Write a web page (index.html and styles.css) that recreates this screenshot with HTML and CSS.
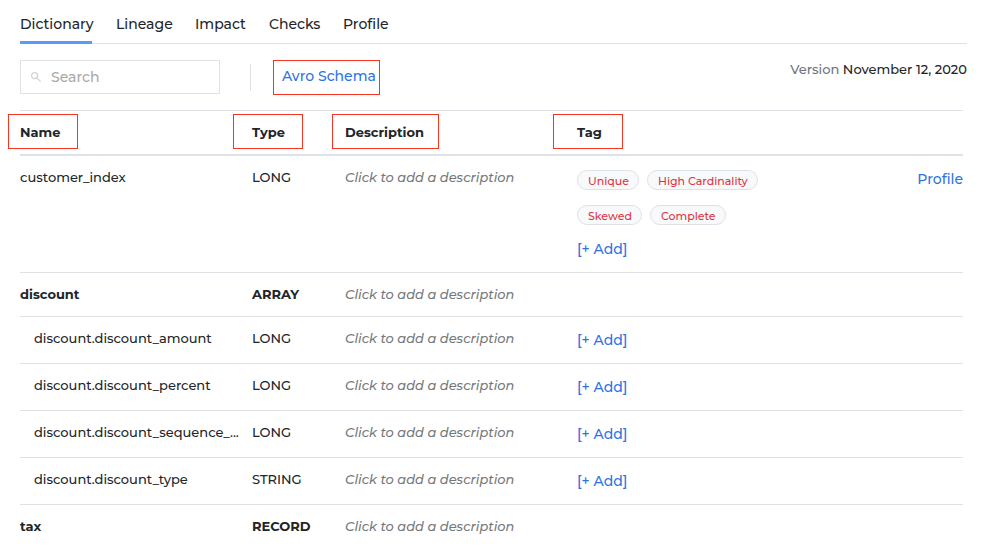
FILE: index.html
```html
<!DOCTYPE html>
<html lang="en">
<head>
<meta charset="utf-8">
<title>Dictionary</title>
<link rel="stylesheet" href="styles.css">
</head>
<body>
<main class="page">
  <nav class="tabs">
    <a class="tab tab-active" href="#dictionary">Dictionary</a>
    <a class="tab" href="#lineage">Lineage</a>
    <a class="tab" href="#impact">Impact</a>
    <a class="tab" href="#checks">Checks</a>
    <a class="tab" href="#profile">Profile</a>
  </nav>
  <div class="toolbar">
    <label class="search">
      <svg class="search-icon" viewBox="0 0 12 12" aria-hidden="true"><circle cx="4.6" cy="4.6" r="3"/><path d="M6.8 6.8l3.8 3.8"/></svg>
      <input class="search-input" type="text" placeholder="Search" aria-label="Search">
    </label>
    <span class="divider"></span>
    <a class="link schema" href="#schema">Avro Schema</a>
    <p class="version"><span class="muted">Version</span> November 12, 2020</p>
  </div>
  <table class="fields">
    <colgroup><col class="col-name"><col class="col-type"><col class="col-desc"><col><col class="col-profile"></colgroup>
    <thead>
      <tr>
        <th><span class="mark mark-name">Name</span></th>
        <th><span class="mark mark-type">Type</span></th>
        <th><span class="mark mark-desc">Description</span></th>
        <th><span class="mark mark-tag">Tag</span></th>
        <th></th>
      </tr>
    </thead>
    <tbody>
      <tr>
        <td>customer_index</td><td>LONG</td>
        <td class="desc">Click to add a description</td>
        <td>
          <div class="tags">
            <span class="tag">Unique</span><span class="tag">High Cardinality</span>
            <span class="tag">Skewed</span><span class="tag">Complete</span>
          </div>
          <button class="link add" type="button">[+ Add]</button>
        </td>
        <td class="action"><a class="link" href="#customer_index">Profile</a></td>
      </tr>
      <tr class="group">
        <td>discount</td><td>ARRAY</td>
        <td class="desc">Click to add a description</td><td></td><td></td>
      </tr>
      <tr class="child">
        <td>discount.discount_amount</td><td>LONG</td>
        <td class="desc">Click to add a description</td>
        <td><button class="link add" type="button">[+ Add]</button></td><td></td>
      </tr>
      <tr class="child">
        <td>discount.discount_percent</td><td>LONG</td>
        <td class="desc">Click to add a description</td>
        <td><button class="link add" type="button">[+ Add]</button></td><td></td>
      </tr>
      <tr class="child">
        <td>discount.discount_sequence_...</td><td>LONG</td>
        <td class="desc">Click to add a description</td>
        <td><button class="link add" type="button">[+ Add]</button></td><td></td>
      </tr>
      <tr class="child">
        <td>discount.discount_type</td><td>STRING</td>
        <td class="desc">Click to add a description</td>
        <td><button class="link add" type="button">[+ Add]</button></td><td></td>
      </tr>
      <tr class="group">
        <td>tax</td><td>RECORD</td>
        <td class="desc">Click to add a description</td><td></td><td></td>
      </tr>
    </tbody>
  </table>
</main>
</body>
</html>
```
FILE: styles.css
```css
*, *::before { box-sizing: border-box; }
body {
  margin: 0;
  background: #fff;
  color: #212529;
  font: 500 13px/18px Montserrat, Inter, "Open Sans", sans-serif;
}
.page { padding: 0 37px 0 20px; }
.tabs {
  display: grid;
  grid-template-columns: 72px 55px 50px 50px 45px;
  gap: 24px;
  border-bottom: 1px solid #dee2e6;
}
.tab {
  padding: 15px 0 8px;
  margin-bottom: -1px;
  border-bottom: 3px solid transparent;
  white-space: nowrap;
  color: inherit;
  font-size: 14px;
  text-decoration: none;
}
.tab-active { border-bottom-color: #5c9af5; }
.toolbar {
  display: flex;
  align-items: flex-start;
  padding: 16px 0 15px;
}
.search {
  display: flex;
  align-items: center;
  width: 200px;
  height: 34px;
  padding: 0 9px;
  gap: 9px;
  border: 1px solid #dee2e6;
}
.search-icon {
  flex: none;
  width: 12px;
  height: 12px;
  fill: none;
  stroke: #ced4da;
  stroke-width: 1.3;
}
.search-input {
  flex: 1;
  min-width: 0;
  padding: 0;
  border: 0;
  outline: 0;
  background: none;
  color: inherit;
  font: inherit;
  font-size: 14px;
}
.search-input::placeholder { color: #a9a9a9; }
.divider {
  width: 1px;
  height: 27px;
  margin: 4px 22px 0 30px;
  background: #dee2e6;
}
.link {
  color: #2f73e0;
  font-size: 14px;
  font-weight: 500;
  line-height: 23px;
  text-decoration: none;
}
.schema {
  height: 35px;
  padding: 4px 3px 4px 8px;
  border: 1px solid #f5351f;
}
.version { margin: 0 0 0 auto; }
.muted { color: #6c757d; }
.fields {
  width: calc(100% - 4px);
  table-layout: fixed;
  border-spacing: 0;
}
.col-name { width: 232px; }
.col-type { width: 93px; }
.col-desc { width: 232px; }
.col-profile { width: 100px; }
th, td {
  height: 44px;
  padding: 12px 0 11px;
  border-top: 1px solid #dee2e6;
  text-align: left;
  vertical-align: top;
  white-space: nowrap;
}
th {
  height: 45px;
  border-bottom: 1px solid #dee2e6;
  font-weight: 700;
}
.mark { position: relative; }
.mark::before {
  content: "";
  position: absolute;
  top: -10px;
  width: 70px;
  height: 35px;
  border: 1px solid #f5351f;
}
.mark-name::before { left: -12px; }
.mark-type::before { left: -19px; }
.mark-desc::before { left: -13px; width: 107px; }
.mark-tag::before { left: -24px; }
.group td { font-weight: 700; }
.child td:first-child { padding-left: 14px; }
td.desc, .group td.desc {
  color: #76797b;
  font-style: italic;
  font-weight: 500;
}
.tags {
  display: flex;
  flex-wrap: wrap;
  gap: 15px 8px;
  max-width: 200px;
  padding: 2px 0 13px;
}
.tag {
  height: 20px;
  padding: 1px 9px 0 10px;
  border: 1px solid #dee2e6;
  border-radius: 10px;
  background: #f8f9fa;
  color: #dc3545;
  font-size: 11px;
  line-height: 18px;
}
.add {
  display: block;
  padding: 0;
  border: 0;
  background: none;
  font-family: inherit;
}
.action { text-align: right; }
```
